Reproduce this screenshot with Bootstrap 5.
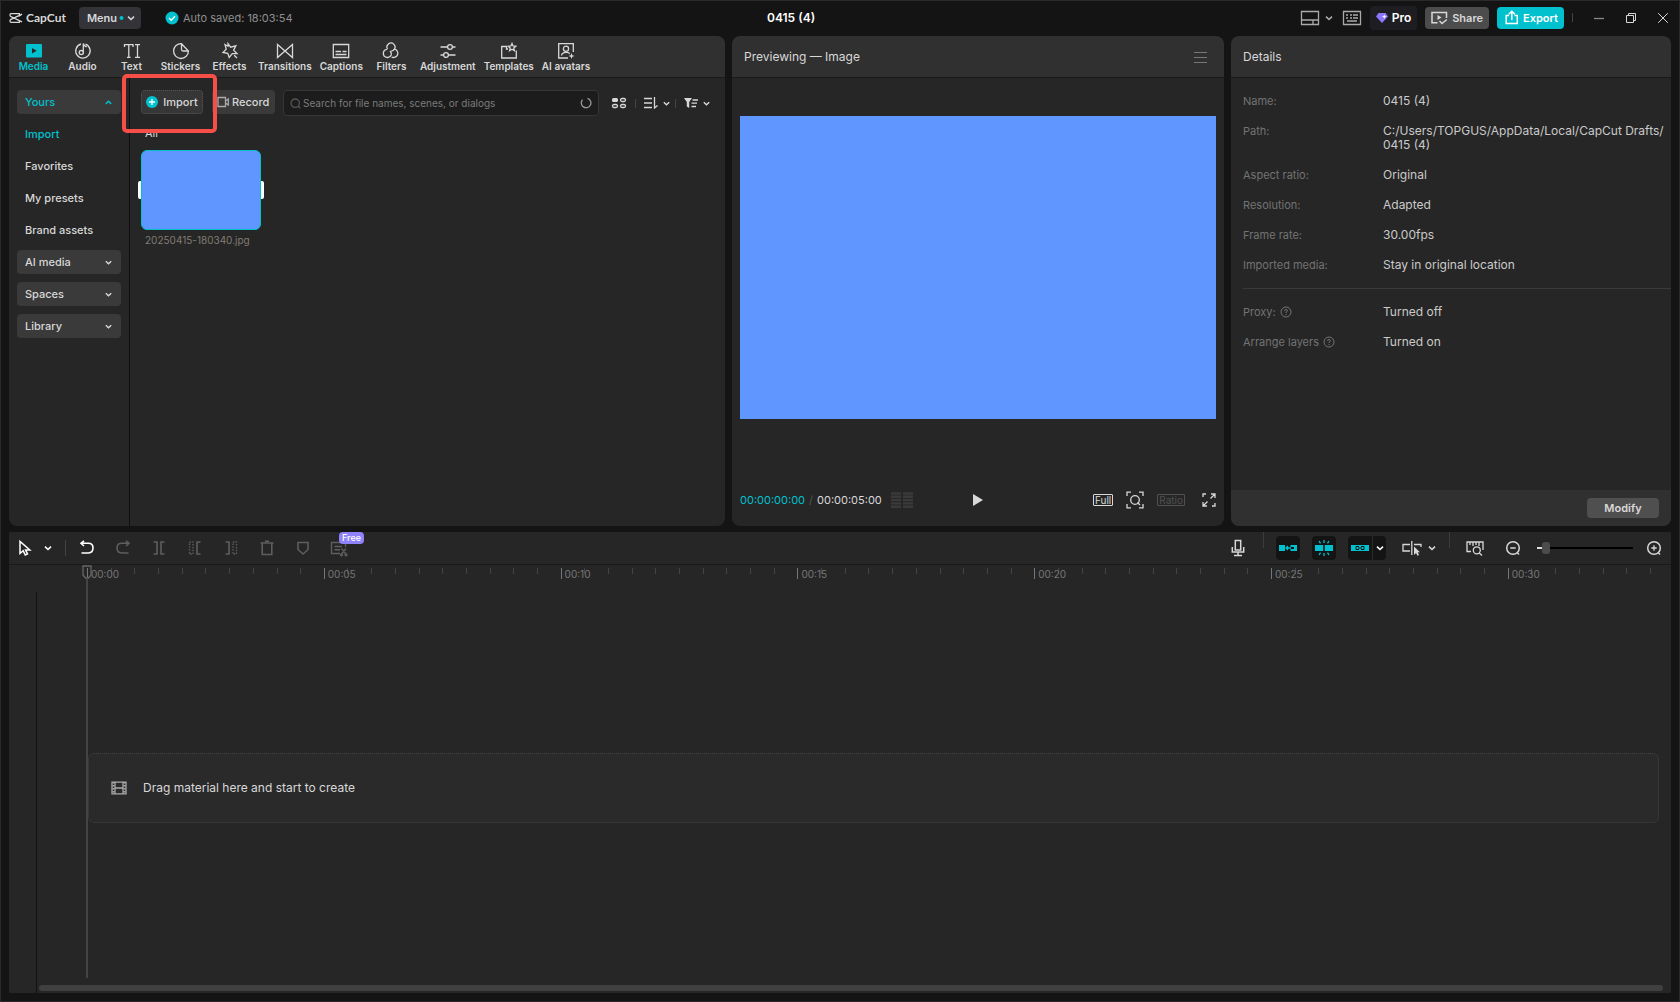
<!DOCTYPE html>
<html lang="en" data-bs-theme="dark">
<head>
<meta charset="utf-8">
<meta name="viewport" content="width=device-width, initial-scale=1">
<title>CapCut - 0415 (4)</title>
<link href="https://cdn.jsdelivr.net/npm/bootstrap@5.3.0/dist/css/bootstrap.min.css" rel="stylesheet">
<style>
:root{--teal:#00c1cd;--panel:#262626;--head:#303030;--pill:#3a3a3a;--txt:#d8d8d8;--dim:#737373}
body{font-family:Inter,"Liberation Sans",sans-serif;font-size:12px;line-height:16px;color:var(--txt);background:#141414;min-height:100vh;border:1px solid #2a2a2a;border-bottom-color:#2c2628}
svg{display:block;flex:none;fill:none;stroke:currentColor;stroke-width:1.3}
button{background:none;border:0;padding:0;color:inherit;font-weight:500;line-height:16px}
.app-shell{min-height:calc(100vh - 2px);padding:0 8px 8px}
.title-bar{height:33px;margin-bottom:2px}
.title-left{width:758px}
.doc-title{font-size:12px;line-height:16px}
.brand-name{font-family:Lato,sans-serif;font-size:12px;font-weight:700;margin-left:3px}
.pill-btn{height:22px;border-radius:4px;padding:0 6px;font-size:11px;font-weight:600}
.menu-btn{background:#333338;width:62px;padding:0 7px 0 8px;margin-left:13px;gap:2px}
.saved-note{font-size:11px;color:#8f8f8f}
.pro-btn{height:24px;background:#1e1e22;padding:0 6px;font-size:12px}
.share-btn{background:#4c4c4c}
.export-btn{background:var(--teal);padding:0 6px 0 8px}
.panel-row{flex:490 1 0;gap:7px}
.panel{background:var(--panel);border-radius:8px;overflow:hidden;min-width:0}
.panel-media{flex:716 1 0;position:relative;overflow:visible}
.panel-preview{flex:492 1 0}
.panel-details{flex:440 1 0}
.panel-head{height:42px;background:var(--head);border-bottom:1px solid #1a1a1a;border-radius:8px 8px 0 0;flex:none}
.tool-tab{min-width:49px;padding:6px 4px 0;font-size:10px;line-height:12px;font-weight:600;text-decoration:none;color:var(--txt);white-space:nowrap}
.tool-tab.on,.side-item.on{color:var(--teal)}
.side-nav{width:121px;padding:12px 8px;gap:8px;border-right:1px solid #0e0e0e}
.side-item{height:24px;padding:0 8px;border-radius:4px;font-size:11px;font-weight:500;color:var(--txt);text-decoration:none}
.side-item.group{background:var(--pill)}
.media-area{padding:12px 14px 0 11px}
.import-btn{height:24px;width:62px;background:#363636;border:1px dotted #555;border-radius:4px;font-size:11px;gap:5px;justify-content:center}
.record-btn{height:24px;width:63px;margin-left:9px;padding-left:5px;background:var(--pill);border-radius:4px;font-size:11px;gap:3px}
.search-box{height:26px;margin-left:8px;background:#1c1c1c;border:1px solid #363636;border-radius:4px;padding:0 6px;color:var(--dim)}
.search-box input{border:0;background:none;outline:0;color:inherit;font-size:10px;min-width:0}
.search-box input::placeholder{color:#7b7b7b}
.bar-sep{width:1px;height:9px;background:#444}
.all-label{font-size:11px;line-height:14px;margin:10px 0 10px 4px}
.clip{width:120px}
.clip-thumb{height:80px;background:#6096ff;border:1px solid var(--teal);border-radius:6px;position:relative}
.clip-thumb::before,.clip-thumb::after{content:"";position:absolute;top:30px;width:3px;height:18px;background:#fff}
.clip-thumb::before{left:-4px;border-radius:2px 0 0 2px}
.clip-thumb::after{right:-4px;border-radius:0 2px 2px 0}
.clip-name{font-size:10px;line-height:14px;color:#827b74;margin:3px 0 0 4px}
.callout{position:absolute;left:113px;top:38px;width:95px;height:59px;border:4px solid #f84e48;border-radius:5px;pointer-events:none}
.video-frame{background:#6096ff;aspect-ratio:476/303;margin-bottom:16px}
.play-bar{height:53px;padding:0 8px}
.timecode{font-size:11px}
.play-side{flex:1 1 0}
.boxed{border:1px solid currentColor;font-size:10px;line-height:10px;border-radius:1px;font-weight:400;height:12px;padding:0 1px}
.info-list{padding:16px 0 0 12px;margin:0}
.info-list dt{width:140px;flex:none;font-weight:400;font-size:11px;line-height:14px;color:var(--dim)}
.info-list dd{margin:0;line-height:14px;color:#cacaca}
.info-pair{margin-bottom:16px}
.info-rule{height:1px;background:#3a3a3a}
.panel-foot{height:36px;background:var(--head);padding-right:12px}
.modify-btn{width:72px;height:20px;background:#4f4f4f;border-radius:4px;font-size:11px;font-weight:600}
.timeline{flex:461 1 0;background:var(--panel);margin-top:6px}
.tl-bar{height:33px;border-bottom:1px solid #1a1a1a;padding:0 8px 0 7px}
.tl-left{gap:18px;color:#5e5e5e}
.tl-left svg,.tl-right svg{width:18px;height:18px}
.tl-left .chev,.tl-right .chev{width:10px;height:10px}
.free-tag{position:absolute;left:9px;top:-7px;font-size:9px;line-height:12px;border-radius:4px;background:#9082fb;color:#fff;padding:0 3px;font-weight:500}
.dark-chip{height:24px;min-width:24px;background:#141414;border-radius:4px;color:var(--teal)}
.chip-arrow{width:14px;height:24px;background:#141414;border-left:1px solid #2a2a2a;border-radius:0 4px 4px 0}
.tall-sep{width:1px;height:16px;background:#3c3c3c;align-self:flex-start}
.zoom-range{-webkit-appearance:none;appearance:none;width:96px;height:12px;margin:0 0 0 3px;background:linear-gradient(90deg,#ddd 6px,#000 6px) center/100% 2px no-repeat}
.zoom-range::-webkit-slider-thumb{-webkit-appearance:none;width:8px;height:12px;border-radius:3px;background:#4c4c4c}
.track-heads{width:28px;border-right:1px solid #121212;margin-top:27px}
.tracks{padding-left:50px;min-width:0}
.ruler{height:27px;overflow:hidden;padding-top:3px}
.ruler-seg{flex:none;width:14.95%;position:relative;height:12px}
.tick{flex:1 1 0;border-left:1px solid #444;height:6px}
.tick:first-child{height:11px;border-color:#777}
.tick-label{position:absolute;left:4px;top:0;font-size:10px;line-height:12px;color:#777}
.playhead{position:absolute;left:73px;top:0;bottom:15px;width:10px;color:#666}
.playhead::after{content:"";position:absolute;left:4px;top:13px;bottom:0;width:2px;background:#444}
.drop-zone{height:70px;background:#2a2a2a;border:1px dotted #444;border-radius:6px;margin:0 12px 2px 1px;padding-left:22px;gap:16px}
.h-scroll{height:6px;border-radius:3px;background:#404040;margin:0 8px 2px -48px}
</style>
<script src="https://cdn.jsdelivr.net/npm/bootstrap@5.3.0/dist/js/bootstrap.bundle.min.js"></script>
</head>
<body>
<svg width="0" height="0" class="position-absolute" aria-hidden="true">
  <symbol id="chev" viewBox="0 0 10 10"><path d="M2 3.7 5 6.5 8 3.7" stroke-width="1.6"/></symbol>
  <symbol id="chev-up" viewBox="0 0 10 10"><path d="M2 6.5 5 3.7 8 6.5" stroke-width="1.6"/></symbol>
  <symbol id="help" viewBox="0 0 12 12"><circle cx="6" cy="6" r="5" stroke-width="1"/><path d="M4.5 5Q4.6 3.5 6 3.5T7.5 4.8Q7.4 5.6 6 6.2V7M6 8V9" stroke-width="1"/></symbol>
</svg>
<div class="app-shell d-flex flex-column">
  <header class="title-bar d-flex align-items-center">
    <div class="title-left d-flex align-items-center">
      <svg width="14" height="12" viewBox="0 0 14 12" stroke-width="1.8"><path d="M13 2.2 10.4 3.8V1.6H2Q1 1.6 1 3T2 4.6L13 9.8M13 2.2 2 7.4Q1 7.8 1 9T2 10.4H10.4V8.4"/></svg>
      <span class="brand-name">CapCut</span>
      <button class="pill-btn menu-btn d-flex align-items-center">Menu<svg width="5" height="6" viewBox="0 0 5 6"><circle cx="2.5" cy="3" r="2" fill="#00c1cd" stroke="none"/></svg><svg class="ms-auto" width="10" height="10"><use href="#chev"/></svg></button>
      <svg class="ms-4" width="14" height="14" viewBox="0 0 14 14"><circle cx="7" cy="7" r="6.5" fill="#00c1cd" stroke="none"/><path d="M4 7 6.2 9.2 10 5.2" stroke="#fff"/></svg>
      <span class="saved-note ms-1">Auto saved: 18:03:54</span>
    </div>
    <h1 class="doc-title m-0 fw-semibold">0415 (4)</h1>
    <div class="d-flex align-items-center ms-auto gap-2">
      <button class="d-flex align-items-center gap-1" aria-label="Layout"><svg width="20" height="16" viewBox="0 0 20 16" color="#aaa"><path d="M1.5 1.5H18.5V14.5H1.5ZM1.5 10H18.5M13 10V14.5"/></svg><svg width="10" height="10" color="#aaa"><use href="#chev"/></svg></button>
      <button aria-label="Shortcuts"><svg width="20" height="16" viewBox="0 0 20 16" color="#aaa"><path d="M1.5 1.5H18.5V14.5H1.5ZM4 5H6M8 5H10M11 5H16M4 8H6M8 8H10M11 8H16M5 11H15"/></svg></button>
      <button class="pill-btn pro-btn d-flex align-items-center gap-1"><svg width="12" height="12" viewBox="0 0 12 12"><path d="M2.5 1H9.5L12 4.5 6 11 0 4.5Z" fill="#8b76ff" stroke="none"/><path d="M8.3 2.4 9 4 10.5 4.6 9 5.2 8.3 6.8 7.6 5.2 6 4.6 7.6 4Z" fill="#fff" stroke="none"/></svg><b class="fw-semibold text-white">Pro</b></button>
      <button class="pill-btn share-btn d-flex align-items-center gap-1"><svg width="17" height="14" viewBox="0 0 17 14"><path d="M6.5 11.8H1V1.5H15.5V7" stroke-width="1.5"/><path d="M6.5 4V9L10.5 6.5Z" fill="currentColor" stroke="none"/><path d="M8.5 10 11 12.5 15.8 8.5" stroke-width="1.5"/></svg>Share</button>
      <button class="pill-btn export-btn d-flex align-items-center gap-1 text-white"><svg width="14" height="15" viewBox="0 0 14 15"><path d="M4 5.5H1.2V13.5H12.3V5.5H9.5M6.8 10V1.5M3.8 4.2 6.8 1.2 9.8 4.2" stroke-width="1.5"/></svg>Export</button>
      <span class="bar-sep"></span>
      <div class="d-flex align-items-center" style="gap:20px;padding:0 2px 0 12px">
        <button aria-label="Minimize"><svg width="12" height="12" viewBox="0 0 12 12"><path d="M1 6.5H11" stroke="#888"/></svg></button>
        <button aria-label="Restore"><svg width="12" height="12" viewBox="0 0 12 12"><path d="M1.5 3.5H8.5V10.5H1.5ZM3.5 3.5V1.5H10.5V8.5H8.5" stroke-width="1"/></svg></button>
        <button aria-label="Close"><svg width="12" height="12" viewBox="0 0 12 12"><path d="M1.2 1.2 10.8 10.8M10.8 1.2 1.2 10.8" stroke-width="1"/></svg></button>
      </div>
    </div>
  </header>

  <main class="panel-row d-flex">
    <section class="panel panel-media d-flex flex-column">
      <nav class="panel-head d-flex" aria-label="Tools">
        <a href="#" class="tool-tab on d-flex flex-column align-items-center"><svg width="18" height="18" viewBox="0 0 18 18"><rect x="1" y="2" width="16" height="13.5" rx="1" fill="currentColor" stroke="none"/><path d="M7 6V11.5L11.7 8.8Z" fill="#262626" stroke="none"/></svg>Media</a>
        <a href="#" class="tool-tab d-flex flex-column align-items-center"><svg width="18" height="18" viewBox="0 0 18 18"><path d="M7 2A7.2 7.2 0 1 0 11.5 2.2M9.3 10.5V1.5Q10 4.3 12.8 4.8"/><circle cx="7.3" cy="10.6" r="2.1"/></svg>Audio</a>
        <a href="#" class="tool-tab d-flex flex-column align-items-center"><svg width="18" height="18" viewBox="0 0 18 18"><path d="M1.5 5V2.6H10V5M5.8 2.6V15M4 15.3H7.6M12 2.6H17M14.5 2.6V15.3M12 15.3H17"/></svg>Text</a>
        <a href="#" class="tool-tab d-flex flex-column align-items-center"><svg width="18" height="18" viewBox="0 0 18 18"><path d="M9.5 1.7A7.4 7.4 0 1 0 16.4 9ZM9.5 1.7V7.5Q9.5 9 11 9H16.4"/></svg>Stickers</a>
        <a href="#" class="tool-tab d-flex flex-column align-items-center"><svg width="18" height="18" viewBox="0 0 18 18"><path d="M7 1.5 9.6 5.2 14.8 3.8 12.6 8.2 16 11.6 11.3 11.6 8.2 15.5 6.8 11.3 2 10.5 5.2 7.1 4 2.5 7 4.2ZM13.2 13.2 16 16"/></svg>Effects</a>
        <a href="#" class="tool-tab d-flex flex-column align-items-center"><svg width="18" height="18" viewBox="0 0 18 18"><path d="M1.5 2.5 16.5 15.5V2.5L1.5 15.5Z"/></svg>Transitions</a>
        <a href="#" class="tool-tab d-flex flex-column align-items-center"><svg width="18" height="18" viewBox="0 0 18 18"><path d="M1.3 2.5H16.7V15.5H1.3Z"/><path d="M3.5 9.5H9M10.5 9.5H14.5M3.5 12.5H14.5" stroke-width="1.5"/></svg>Captions</a>
        <a href="#" class="tool-tab d-flex flex-column align-items-center"><svg width="18" height="18" viewBox="0 0 18 18"><path d="M5.6 7.2A4 4 0 1 1 12.2 7.4Q11.5 8.7 9.2 9.2M9.6 15A4.2 4.2 0 1 0 12.5 7.2M5 7.3A4.1 4.1 0 1 0 9.2 13Q9.8 11 8 9"/></svg>Filters</a>
        <a href="#" class="tool-tab d-flex flex-column align-items-center"><svg width="18" height="18" viewBox="0 0 18 18"><path d="M1.5 5H8.5M13.5 5H16.5M1.5 13H4.5M9.5 13H16.5"/><circle cx="11" cy="5" r="2.4"/><circle cx="7" cy="13" r="2.4"/></svg>Adjustment</a>
        <a href="#" class="tool-tab d-flex flex-column align-items-center"><svg width="18" height="18" viewBox="0 0 18 18"><path d="M8 7H6.5V4.5H1.7V16H16.3V8.5M12 1.5 13 4 15.8 4.2 13.8 6 14.4 8.7 12 7.2 9.6 8.7 10.2 6 8.2 4.2 11 4Z"/></svg>Templates</a>
        <a href="#" class="tool-tab d-flex flex-column align-items-center"><svg width="18" height="18" viewBox="0 0 18 18"><path d="M11 16H1.7V1.7H16.3V10M4.5 13.5Q5 10.3 9 10.3T12 12"/><circle cx="9" cy="6.8" r="2.6"/><path d="M14.5 11 15.3 13.2 17.5 14 15.3 14.8 14.5 17 13.7 14.8 11.5 14 13.7 13.2Z" fill="currentColor" stroke="none"/></svg>AI avatars</a>
      </nav>
      <div class="d-flex flex-grow-1">
        <nav class="side-nav d-flex flex-column" aria-label="Media sources">
          <a href="#" class="side-item group on d-flex align-items-center justify-content-between">Yours<svg width="9" height="9"><use href="#chev-up"/></svg></a>
          <a href="#" class="side-item on d-flex align-items-center">Import</a>
          <a href="#" class="side-item d-flex align-items-center">Favorites</a>
          <a href="#" class="side-item d-flex align-items-center">My presets</a>
          <a href="#" class="side-item d-flex align-items-center">Brand assets</a>
          <a href="#" class="side-item group d-flex align-items-center justify-content-between">AI media<svg width="9" height="9"><use href="#chev"/></svg></a>
          <a href="#" class="side-item group d-flex align-items-center justify-content-between">Spaces<svg width="9" height="9"><use href="#chev"/></svg></a>
          <a href="#" class="side-item group d-flex align-items-center justify-content-between">Library<svg width="9" height="9"><use href="#chev"/></svg></a>
        </nav>
        <div class="media-area flex-grow-1">
          <div class="d-flex align-items-center">
            <button class="import-btn d-flex align-items-center align-self-start"><svg width="12" height="12" viewBox="0 0 12 12"><circle cx="6" cy="6" r="6" fill="#00c1cd" stroke="none"/><path d="M6 3V9M3 6H9" stroke="#fff"/></svg>Import</button>
            <button class="record-btn d-flex align-items-center align-self-start"><svg width="12" height="12" viewBox="0 0 12 12" color="#aaa"><path d="M1 1.5H8.5V10.5H1ZM8.5 5 11.3 3V9L8.5 7"/></svg>Record</button>
            <label class="search-box d-flex align-items-center flex-grow-1"><svg width="11" height="11" viewBox="0 0 11 11" color="#555"><circle cx="5.2" cy="5.2" r="4.2"/><path d="M8 8 10.3 10.3"/></svg><input class="flex-grow-1" type="text" aria-label="Search media" placeholder="Search for file names, scenes, or dialogs"><svg width="12" height="12" viewBox="0 0 12 12" color="#999"><path d="M7.5 1.3A4.8 4.8 0 1 1 2.5 2.7"/></svg></label>
            <button class="ms-2" aria-label="View"><svg class="mx-1" width="16" height="12" viewBox="0 0 16 12"><rect x="1" y="1" width="6" height="4" rx="1.5" fill="currentColor" stroke="none"/><rect x="9.5" y="1.5" width="5" height="3" rx="1.5"/><rect x="1.5" y="7.5" width="5" height="3" rx="1.5"/><rect x="9.5" y="7.5" width="5" height="3" rx="1.5"/></svg></button>
            <span class="bar-sep mx-1"></span>
            <button class="d-flex align-items-center gap-1 ms-1" aria-label="Sort"><svg width="14" height="12" viewBox="0 0 14 12"><path d="M0 1.5H8M0 6H8M0 10.5H8M10.5 0V11L13.5 8.5"/></svg><svg width="9" height="9"><use href="#chev"/></svg></button>
            <span class="bar-sep mx-1"></span>
            <button class="d-flex align-items-center gap-1 ms-1" aria-label="Filter"><svg width="14" height="12" viewBox="0 0 14 12"><path d="M0 1H8L5.2 5V11L2.8 9.5V5Z" fill="currentColor" stroke="none"/><path d="M8.5 3H14M7.5 6.2H13M7.5 9.5H12"/></svg><svg width="9" height="9"><use href="#chev"/></svg></button>
          </div>
          <div class="all-label">All</div>
          <figure class="clip m-0"><div class="clip-thumb"></div><figcaption class="clip-name">20250415-180340.jpg</figcaption></figure>
        </div>
      </div>
      <div class="callout"></div>
    </section>

    <section class="panel panel-preview d-flex flex-column">
      <div class="panel-head d-flex align-items-center ps-2 pe-3"><span class="ms-1">Previewing — Image</span><button class="ms-auto" aria-label="Preview menu"><svg width="14" height="12" viewBox="0 0 14 12"><path d="M0 1.5H13M0 6.5H13M0 11.5H13" stroke="#777" stroke-width="1"/></svg></button></div>
      <div class="flex-grow-1 d-flex flex-column justify-content-center px-2"><div class="video-frame"></div></div>
      <div class="play-bar d-flex align-items-center">
        <div class="play-side timecode d-flex align-items-center"><span style="color:var(--teal)">00:00:00:00</span><span class="mx-1" style="color:#555">/</span><span>00:00:05:00</span><svg class="ms-2" width="24" height="16" viewBox="0 0 24 16"><path d="M1 1.5H11M1 4.8H11M1 8.1H11M1 11.4H11M1 14.7H11M13 1.5H23M13 4.8H23M13 8.1H23M13 11.4H23M13 14.7H23" stroke="#3a3a3a" stroke-width="2.4"/></svg></div>
        <button aria-label="Play"><svg width="12" height="14" viewBox="0 0 12 14"><path d="M1 1V13L11 7Z" fill="currentColor" stroke="none"/></svg></button>
        <div class="play-side d-flex align-items-center justify-content-end" style="gap:13px">
          <button class="boxed">Full</button>
          <button aria-label="Zoom frame"><svg width="18" height="18" viewBox="0 0 18 18"><path d="M1 5V1.2H5M13 1.2H17V5M17 13V16.8H13M5 16.8H1V13"/><circle cx="9" cy="9" r="4.3"/><path d="M11.5 11.5 14 14"/></svg></button>
          <button class="boxed" style="color:#505050">Ratio</button>
          <button aria-label="Full screen"><svg class="ms-1" width="14" height="14" viewBox="0 0 14 14"><path d="M1 4V1H4M9 1H13V5M13 10V13H10M5 13H1V9M13 1 8.5 5.5M1 13 5.5 8.5"/></svg></button>
        </div>
      </div>
    </section>

    <section class="panel panel-details d-flex flex-column">
      <div class="panel-head d-flex align-items-center ps-2"><span class="ms-1">Details</span></div>
      <dl class="info-list flex-grow-1">
        <div class="info-pair d-flex"><dt>Name:</dt><dd>0415 (4)</dd></div>
        <div class="info-pair d-flex"><dt>Path:</dt><dd><div class="text-nowrap">C:/Users/TOPGUS/AppData/Local/CapCut Drafts/</div><div>0415 (4)</div></dd></div>
        <div class="info-pair d-flex"><dt>Aspect ratio:</dt><dd>Original</dd></div>
        <div class="info-pair d-flex"><dt>Resolution:</dt><dd>Adapted</dd></div>
        <div class="info-pair d-flex"><dt>Frame rate:</dt><dd>30.00fps</dd></div>
        <div class="info-pair d-flex"><dt>Imported media:</dt><dd>Stay in original location</dd></div>
        <div class="info-rule mb-3"></div>
        <div class="info-pair d-flex"><dt class="d-flex align-items-center gap-1">Proxy:<svg width="12" height="12"><use href="#help"/></svg></dt><dd>Turned off</dd></div>
        <div class="info-pair d-flex"><dt class="d-flex align-items-center gap-1">Arrange layers<svg width="12" height="12"><use href="#help"/></svg></dt><dd>Turned on</dd></div>
      </dl>
      <div class="panel-foot d-flex align-items-center justify-content-end"><button class="modify-btn">Modify</button></div>
    </section>
  </main>

  <section class="timeline d-flex flex-column">
    <div class="tl-bar d-flex align-items-center">
      <div class="tl-left d-flex align-items-center">
        <button class="d-flex align-items-center text-white" style="gap:9px" aria-label="Select tool"><svg viewBox="0 0 18 18"><path d="M4 2.5V14.5L7.2 11.8 9.3 16 11.5 15 9.5 10.9H13.8Z" stroke-width="1.5"/></svg><svg class="chev"><use href="#chev"/></svg></button>
        <span class="bar-sep" style="height:16px;margin:0 -6px"></span>
        <button class="text-white" aria-label="Undo"><svg viewBox="0 0 18 18"><path d="M6 1.8 3 4.3 6 7M3 4.3H10.5Q15 4.3 15 9T10.5 14H3.5" stroke-width="1.6"/></svg></button>
        <button aria-label="Redo"><svg viewBox="0 0 18 18"><path d="M12 1.8 15 4.3 12 7M15 4.3H7.5Q3 4.3 3 9T7.5 14H14.5" stroke-width="1.6"/></svg></button>
        <button aria-label="Split"><svg viewBox="0 0 18 18"><path d="M3.5 3H7V15H3.5M14.5 3H11V15H14.5" stroke-width="1.6"/></svg></button>
        <button aria-label="Delete left"><svg viewBox="0 0 18 18"><path d="M3.5 3H7V15H3.5V3" stroke-dasharray="1.5 1.3"/><path d="M14.5 3H11V15H14.5" stroke-width="1.6"/></svg></button>
        <button aria-label="Delete right"><svg viewBox="0 0 18 18"><path d="M3.5 3H7V15H3.5" stroke-width="1.6"/><path d="M11 3H14.5V15H11V3" stroke-dasharray="1.5 1.3"/></svg></button>
        <button aria-label="Delete"><svg viewBox="0 0 18 18"><path d="M2.5 4H15.5M4.2 4V15.5H13.8V4M7 2.3H11" stroke-width="1.6"/></svg></button>
        <button aria-label="Marker"><svg viewBox="0 0 18 18"><path d="M4 3.5H14V10.5L9 15 4 10.5Z" stroke-width="1.6"/></svg></button>
        <button class="position-relative" aria-label="Auto captions, free"><svg viewBox="0 0 18 18"><path d="M10 14.5H1.5V3.5H15.5V8M4.5 7.5H12M4.5 10.8H10M11.5 9.5 16 15M16 9.5 11.5 15" stroke-width="1.4"/><circle cx="11.5" cy="15.8" r="1"/><circle cx="16" cy="15.8" r="1"/></svg><span class="free-tag">Free</span></button>
      </div>
      <div class="tl-right d-flex align-items-center align-self-stretch ms-auto" style="gap:12px">
        <button aria-label="Record voiceover"><svg viewBox="0 0 18 18"><path d="M6.3 1.5H11.7V11H6.3ZM3.3 8V13H14.7V8M9 13V16.5M5 16.5H13" stroke-width="1.5"/></svg></button>
        <span class="tall-sep ms-1"></span>
        <button class="dark-chip d-flex align-items-center justify-content-center" aria-label="Main track magnet"><svg viewBox="0 0 18 18"><path d="M0 6H6V12H0Z" fill="currentColor" stroke="none"/><path d="M9 7 7 9 9 11M7 9H12" /><path d="M11.5 6H18V12H11.5V10H15V8H11.5Z" fill="currentColor" stroke="none"/></svg></button>
        <button class="dark-chip d-flex align-items-center justify-content-center" aria-label="Auto snapping"><svg viewBox="0 0 18 18"><path d="M0 6H8.2V12H0ZM9.8 6H18V12H9.8Z" fill="currentColor" stroke="none"/><path d="M9 1V4M9 14V17M4 2 5.5 4.3M14 2 12.5 4.3M4 16 5.5 13.7M14 16 12.5 13.7"/></svg></button>
        <div class="d-flex"><button class="dark-chip rounded-end-0 d-flex align-items-center justify-content-center" aria-label="Linkage"><svg viewBox="0 0 18 18"><path d="M0 6H18V12H0Z" fill="currentColor" stroke="none"/><path d="M8 7.5H5V10.5H8M10 7.5H13V10.5H10M7 9H11" stroke="#141414" stroke-width="1"/></svg></button><button class="chip-arrow d-flex align-items-center justify-content-center text-white" aria-label="Linkage options"><svg class="chev"><use href="#chev"/></svg></button></div>
        <button class="d-flex align-items-center ms-1" style="gap:5px" aria-label="Preview axis"><svg style="width:20px" viewBox="0 0 20 18"><path d="M8 5.5H1V12H8M12 5.5H19V8M9.8 2V16"/><path d="M12 7.5V16L14 14 15.5 16.7 17 16 15.7 13.3H18Z" fill="currentColor" stroke="none"/></svg><svg class="chev"><use href="#chev"/></svg></button>
        <span class="tall-sep"></span>
        <button class="ms-1" aria-label="Zoom to fit"><svg viewBox="0 0 18 18"><path d="M5 12.5H1V3H17V11M4 3V6M7 3V7M10 3V6M13 3V7"/><circle cx="10.8" cy="11.3" r="3.5"/><path d="M13.3 14 16 16.5"/></svg></button>
        <button class="ms-2" aria-label="Zoom out"><svg viewBox="0 0 18 18"><circle cx="9" cy="9" r="6.3" stroke-width="1.5"/><path d="M6.3 9H11.7M13.2 13.5 15 15.5"/></svg></button>
        <input class="zoom-range" type="range" min="0" max="100" value="6" aria-label="Timeline zoom">
        <button aria-label="Zoom in"><svg viewBox="0 0 18 18"><circle cx="9" cy="9" r="6.3" stroke-width="1.5"/><path d="M6.3 9H11.7M9 6.3V11.7M13.2 13.5 15 15.5"/></svg></button>
      </div>
    </div>
    <div class="d-flex flex-grow-1 position-relative">
      <div class="track-heads flex-shrink-0"></div>
      <div class="tracks flex-grow-1 d-flex flex-column">
        <div class="ruler d-flex" id="ruler"></div>
        <div class="flex-grow-1 d-flex flex-column justify-content-center"><div class="drop-zone d-flex align-items-center">
          <svg width="16" height="14" viewBox="0 0 16 14" color="#aaa"><path d="M1 1.2H15V12.8H1ZM4 1.2V12.8M12 1.2V12.8M4 7H12"/><path d="M2.5 1V13M13.5 1V13" stroke-dasharray="1.5 1.5" stroke-width="2"/></svg>
          <span>Drag material here and start to create</span></div></div>
        <div class="h-scroll"></div>
      </div>
      <div class="playhead"><svg width="10" height="14" viewBox="0 0 10 14"><path d="M1 1H9V10L6.5 13H3.5L1 10Z"/></svg></div>
    </div>
  </section>
</div>
<script>
// Build the time ruler: one segment for every five seconds, ten ticks each.
const ruler = document.getElementById('ruler');
for (let s = 0; s <= 30; s += 5) {
  const seg = document.createElement('div');
  seg.className = 'ruler-seg d-flex';
  seg.innerHTML = '<i class="tick"></i>'.repeat(10) + `<span class="tick-label">00:${String(s).padStart(2, '0')}</span>`;
  ruler.append(seg);
}
</script>
</body>
</html>
